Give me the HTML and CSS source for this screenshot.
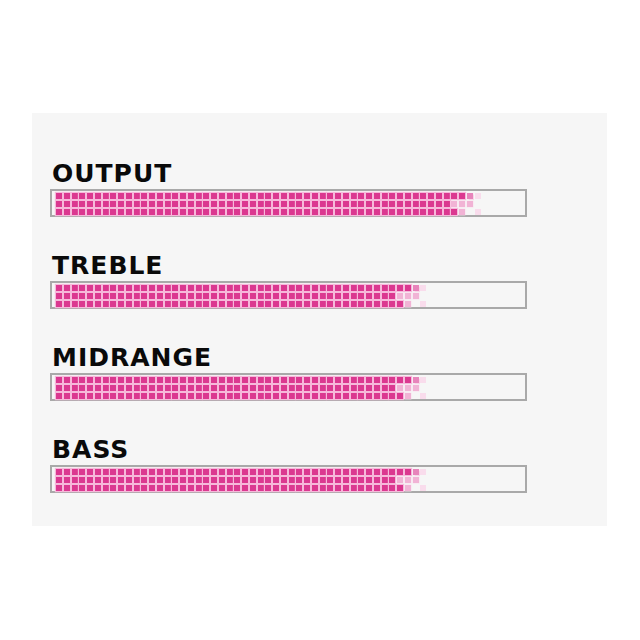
FILE: index.html
```html
<!DOCTYPE html>
<html>
<head>
<meta charset="utf-8">
<link rel="stylesheet" href="styles.css">
</head>
<body>
<div class="page">
  <section class="panel">
    <div class="meter">
      <h2 class="label">OUTPUT</h2>
      <div class="bar" data-level="52"></div>
    </div>
    <div class="meter">
      <h2 class="label">TREBLE</h2>
      <div class="bar" data-level="45"></div>
    </div>
    <div class="meter">
      <h2 class="label">MIDRANGE</h2>
      <div class="bar" data-level="45"></div>
    </div>
    <div class="meter">
      <h2 class="label">BASS</h2>
      <div class="bar" data-level="45"></div>
    </div>
  </section>
</div>
<script src="script.js"></script>
</body>
</html>
```
FILE: styles.css
```css
html, body {
  margin: 0;
  padding: 0;
  background: #ffffff;
}
.page {
  padding: 113px 33px 0 32px;
}
.panel {
  background: #f6f6f6;
  padding: 48px 18px 33px 18px;
  display: flex;
  flex-direction: column;
  gap: 36px;
}
.meter {
  display: flex;
  flex-direction: column;
  gap: 3px;
}
.label {
  margin: 0;
  padding: 1px 0 0 2px;
  font-family: "DejaVu Sans", sans-serif;
  font-weight: 700;
  font-size: 25px;
  line-height: 24px;
  letter-spacing: 1px;
  color: #0a0a0a;
}
.bar {
  width: 477px;
  height: 28px;
  box-sizing: border-box;
  border: 2px solid #a9a9a9;
  padding: 2px 0 0 4px;
  display: flex;
  flex-direction: column;
  gap: 2px;
}
.row {
  display: flex;
  gap: 1.75px;
  height: 6px;
}
.sq {
  width: 6px;
  height: 6px;
  flex: none;
}
.sq.d {
  background: #db3890;
  box-shadow: 0 0 1px 0.6px #f6b8da;
}
.sq.m {
  background: #e784bb;
  box-shadow: 0 0 1px 0.5px #f9d3e7;
}
.sq.l {
  background: #f1b3d5;
  box-shadow: 0 0 1px 0.4px #fadbeb;
}
.sq.f {
  background: #f9dcec;
}
.sq.e {
  background: transparent;
}
```
FILE: script.js
```js
document.querySelectorAll('.bar').forEach(function (bar) {
  var E = parseInt(bar.getAttribute('data-level'), 10);
  var rows = [
    function (k) { return k <= E ? 'd' : k === E + 1 ? 'm' : k === E + 2 ? 'f' : null; },
    function (k) { return k <= E - 2 ? 'd' : k <= E + 1 ? 'l' : null; },
    function (k) { return k <= E - 1 ? 'd' : k === E ? 'l' : k === E + 1 ? 'e' : k === E + 2 ? 'f' : null; }
  ];
  rows.forEach(function (fn) {
    var row = document.createElement('div');
    row.className = 'row';
    for (var k = 0; k < 60; k++) {
      var c = fn(k);
      if (!c) break;
      var s = document.createElement('span');
      s.className = 'sq ' + c;
      row.appendChild(s);
    }
    bar.appendChild(row);
  });
});
```
